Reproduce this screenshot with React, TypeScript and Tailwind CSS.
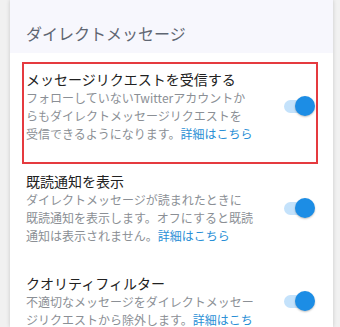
import React from "react";

type Item = {
  title: string;
  lines: React.ReactNode[];
  highlighted?: boolean;
};

const Link = ({ children }: { children: React.ReactNode }) => (
  <span className="text-[#2a8fd6]">{children}</span>
);

const items: Item[] = [
  {
    title: "メッセージリクエストを受信する",
    lines: [
      "フォローしていないTwitterアカウントか",
      "らもダイレクトメッセージリクエストを",
      <>
        受信できるようになります。<Link>詳細はこちら</Link>
      </>,
    ],
    highlighted: true,
  },
  {
    title: "既読通知を表示",
    lines: [
      "ダイレクトメッセージが読まれたときに",
      "既読通知を表示します。オフにすると既読",
      <>
        通知は表示されません。<Link>詳細はこちら</Link>
      </>,
    ],
  },
  {
    title: "クオリティフィルター",
    lines: [
      "不適切なメッセージをダイレクトメッセー",
      <>
        ジリクエストから除外します。<Link>詳細はこち</Link>
      </>,
    ],
  },
];

const Toggle = () => (
  <div className="relative w-[31px] h-[20px] flex items-center shrink-0">
    <div className="w-[26px] h-[13px] rounded-full bg-[#c4e2fb]" />
    <div className="absolute right-0 top-0 w-[20px] h-[20px] rounded-full bg-[#1c8de5] shadow-[0_1px_2px_rgba(0,0,0,0.25)]" />
  </div>
);

export default function App() {
  return (
    <div
      className="w-[340px] h-[327px] overflow-hidden bg-[#f1f1f1]"
      style={{ fontFamily: '"Noto Sans CJK JP", "Noto Sans", sans-serif' }}
    >
      <div className="ml-[10px] w-[323px] h-full bg-white shadow-[0_0_4px_rgba(0,0,0,0.18)] flex flex-col">
        <div className="h-[53px] bg-[#f7f7fd] pl-[16px] pt-[22px] shrink-0">
          <div className="text-[16px] leading-[22px] text-[#5f6672]">
            ダイレクトメッセージ
          </div>
        </div>
        <div className="pt-[9px] pl-[12px] pr-[15px] flex flex-col">
          {items.map((item, i) => (
            <div
              key={i}
              className={`flex items-center border-2 pl-[2px] pr-[1px] pt-[5px] pb-[19px] ${
                item.highlighted ? "border-[#e53a3f]" : "border-transparent"
              }`}
            >
              <div className="flex-1 min-w-0">
                <div className="text-[14px] leading-[20px] text-[#212121] whitespace-nowrap">
                  {item.title}
                </div>
                <div className="text-[12px] leading-[18px] text-[#8b8f95] whitespace-nowrap">
                  {item.lines.map((line, j) => (
                    <div key={j}>{line}</div>
                  ))}
                </div>
              </div>
              <Toggle />
            </div>
          ))}
        </div>
      </div>
    </div>
  );
}
